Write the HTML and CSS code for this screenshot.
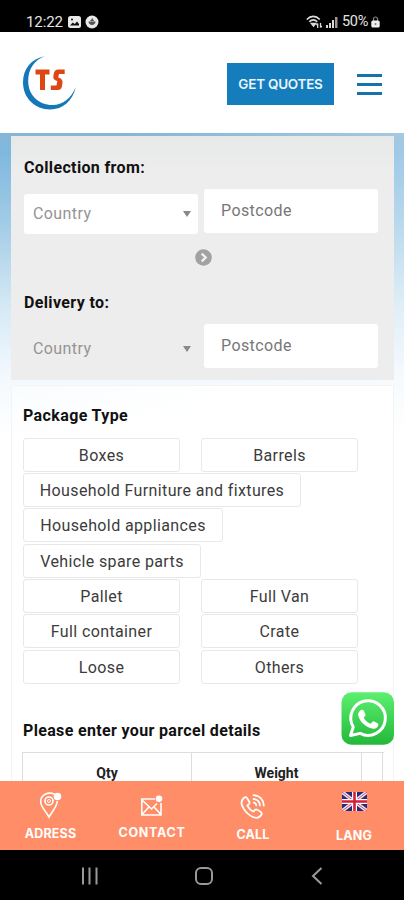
FILE: index.html
```html
<!DOCTYPE html>
<html lang="en">
<head>
<meta charset="utf-8">
<title>Get Quotes</title>
<link rel="stylesheet" href="styles.css">
</head>
<body>
<div class="screen">
  <div class="status">
    <span class="clock">12:22</span>
    <svg class="st-pic" width="13" height="12" viewBox="0 0 13 12"><rect width="13" height="12" rx="2.5" fill="#e8e8e8"/><path d="M2 9.5l2.8-3 2 1.6L9 5.500l2 2.500v1.500z" fill="#111"/><circle cx="4" cy="3.500" r="1" fill="#111"/></svg>
    <svg class="st-app" width="14" height="14" viewBox="0 0 14 14"><circle cx="7" cy="7" r="6.500" fill="#e8e8e8"/><path d="M3.500 6.500h7c0 4.500-7 4.500-7 0zM5 6l2.500-3L9 6z" fill="#555"/></svg>
    <span class="grow"></span>
    <svg class="st-wifi" width="17" height="14" viewBox="0 0 17 14" fill="none" stroke="#ddd" stroke-width="1.600"><path d="M.8 4.500c4-4.200 9-4.200 13 0M3.300 6.800c2.500-2.500 5.500-2.500 8 0"/><path d="M5.500 8.500l2 2.500 2-2.500z" fill="#ddd"/><path d="M11.700 13V8.500M10.400 10l1.300-1.500M14.500 8v4.500M15.800 11l-1.300 1.500" stroke-width="1.300"/></svg>
    <svg class="st-sig" width="12" height="11" viewBox="0 0 12 11" fill="#d8d8d8"><path d="M0 8h2v3H0zM3 6h2v5H3zM6 3h2v8H6z"/><path d="M9 0h2.500v11H9z" fill="#999"/></svg>
    <span class="pct">50%</span>
    <svg class="st-bat" width="9" height="12" viewBox="0 0 9 12"><path d="M2.500 5V3a2 2 0 0 1 4 0v2" fill="none" stroke="#888" stroke-width="1.200"/><rect x=".3" y="4.500" width="8.400" height="7" rx="1.500" fill="#eee"/><circle cx="4.500" cy="8" r="1" fill="#777"/></svg>
  </div>

  <header class="header">
    <svg class="logo" width="56" height="56" viewBox="0 0 56 56">
      <path d="M23 1.200C9 3.500 1 14 1 27.500 1 43 13 54.500 28 54.500 41 54.500 50.500 46 53.800 32 49 43.500 41 50 30.500 50 16.500 50 6.200 40 6.200 26 6.200 14 12.500 4.500 23 1.200z" fill="#1478b8"/>
      <path class="mark" d="M13.500 14.500h14v5h-4.500v15.500h-5V19.500h-4.500zM42.700 14.500v4.500h-5.700l-.8 3.500q4.800 1 4.300 5.500l-.7 4q-.7 3-4.300 3h-6.700v-4.500h5.700l.8-4.500q-4.600-1-3.900-5.500l.7-3q.9-3 4-3z"/>
    </svg>
    <span class="grow"></span>
    <a class="quote-btn">GET QUOTES</a>
    <span class="burger"><i></i><i></i><i></i></span>
  </header>

  <main class="page">
    <section class="route">
      <h2 class="collect">Collection from:</h2>
      <div class="fields">
        <div class="select">Country<i class="caret"></i></div>
        <div class="input">Postcode</div>
      </div>
      <div class="swap"><svg width="17" height="17" viewBox="0 0 17 17"><circle cx="8.500" cy="8.500" r="8.300" fill="#a2a2a2"/><path d="M6.700 4.600l4 3.900-4 3.900" fill="none" stroke="#f2f2f2" stroke-width="2.300"/></svg></div>
      <h2 class="deliver">Delivery to:</h2>
      <div class="fields">
        <div class="select flat">Country<i class="caret"></i></div>
        <div class="input">Postcode</div>
      </div>
    </section>

    <section class="package">
      <h2 class="ptype">Package Type</h2>
      <div class="options">
        <div class="pair"><span>Boxes</span><span>Barrels</span></div>
        <div class="wide w1">Household Furniture and fixtures</div>
        <div class="wide w2">Household appliances</div>
        <div class="wide w3">Vehicle spare parts</div>
        <div class="pair"><span>Pallet</span><span>Full Van</span></div>
        <div class="pair"><span>Full container</span><span>Crate</span></div>
        <div class="pair"><span>Loose</span><span>Others</span></div>
      </div>
      <h2 class="parcel">Please enter your parcel details</h2>
      <div class="table"><span>Qty</span><span>Weight</span><span></span></div>
    </section>
  </main>

  <nav class="tabs">
    <a class="t1"><svg width="24" height="27" viewBox="0 0 24 27" fill="none" stroke="#fff" stroke-width="1.600"><path d="M16 2.500C9-1 1.500 3 1.700 10c.1 5 5.300 9.500 8.300 15 3-5.500 8-10 8.300-16"/><circle cx="10" cy="9" r="4"/><circle cx="10" cy="9" r="1.500" stroke-width="1"/><circle cx="18.500" cy="4.500" r="3.800" fill="#fff" stroke="none"/></svg><span>ADRESS</span></a>
    <a class="t2"><svg width="24" height="22" viewBox="0 0 24 22" fill="none" stroke="#fff" stroke-width="1.600"><path d="M15 4H1.800v16H21V8M2 5l9.500 9L17 8.500M2 19.500l7-7.500M21 19.500L14 12"/><circle cx="19" cy="3.700" r="3.300" fill="#fff" stroke="none"/></svg><span>CONTACT</span></a>
    <a class="t3"><svg width="25" height="25" viewBox="0 0 25 25" fill="none" stroke="#fff" stroke-width="1.800" stroke-linejoin="round" stroke-linecap="round"><path d="M4.500 3.500C1 6 .8 9 2.500 12.500c2 4.500 6 8.500 10.500 10.500 3.500 1.500 6.500 1 8.500-2.500.6-1 .2-1.800-.6-2.400l-3.600-2.300c-1-.6-1.800-.4-2.500.4l-1.300 1.500c-3-1.300-4.700-3-6.200-6l1.600-1.500c.8-.8.900-1.500.4-2.500L7 4C6.300 3 5.500 2.800 4.500 3.500z"/><path d="M13.500 1.200c6 .3 10 4.300 10.300 10.300M13.500 5c3.800.3 6.200 2.700 6.500 6.500M13.700 8.700c1.500.2 2.400 1.200 2.600 2.600"/></svg><span>CALL</span></a>
    <a class="t4"><svg width="25" height="19" viewBox="0 0 25 19"><path fill="#252c78" d="M0 0h25v19H0z"/><path d="M0 0l25 19M25 0L0 19" stroke="#f4dfe8" stroke-width="3.600"/><path d="M0 0l25 19M25 0L0 19" stroke="#c9546f" stroke-width="1"/><path d="M12.500 0v19M0 9.500h25" stroke="#fff" stroke-width="5"/><path d="M12.500 0v19M0 9.500h25" stroke="#d51e3b" stroke-width="2.600"/></svg><span>LANG</span></a>
  </nav>

  <div class="sysbar">
    <svg width="18" height="18" viewBox="0 0 18 18" stroke="#999" stroke-width="2"><path d="M2 .5v17M8.500 .5v17M15.500 .5v17"/></svg>
    <svg class="home" width="18" height="18" viewBox="0 0 18 18" fill="none" stroke="#999" stroke-width="2"><rect x="1" y="1" width="16" height="16" rx="5"/></svg>
    <svg width="12" height="18" viewBox="0 0 12 18" fill="none" stroke="#999" stroke-width="2"><path d="M10.500 1L2 9l8.500 8"/></svg>
  </div>

  <a class="whatsapp"><svg width="53" height="53" viewBox="0 0 53 53">
    <defs><linearGradient id="wa" x1="0" y1="0" x2="0" y2="1"><stop offset="0" stop-color="#5bf070"/><stop offset="1" stop-color="#24b83a"/></linearGradient></defs>
    <rect x=".5" y=".3" width="52.500" height="52.500" rx="10" fill="url(#wa)"/>
    <path d="M9.500 43.500l2.800-8.500a17.300 17.300 0 1 1 6.900 6.400z" fill="none" stroke="#fff" stroke-width="3" stroke-linejoin="round"/>
    <path d="M20 18c1.300-.5 2.400-.3 3 .9l1.400 3.500c.3.800-.1 1.500-.7 2.100l-1.100 1.300c1.900 3.100 3.900 4.800 7.100 6l1.600-1.900c.5-.6 1.100-.7 1.800-.4l3.500 1.700c.8.500.9.900.7 2-.7 2.600-3.200 4.100-6.200 3.200-6.900-1.700-12-6.500-13.700-12.200-.8-2.600.3-4.800 2.600-6.200z" fill="#fff"/>
  </svg></a>
</div>
</body>
</html>
```
FILE: styles.css
```css
* { box-sizing: border-box; }
body { margin: 0; font-family: Roboto, sans-serif; background: #fff; }
.screen { position: relative; width: 404px; height: 900px; overflow: hidden; display: flex; flex-direction: column; }
.grow { flex: 1; }
svg { display: block; flex: none; }

.status { height: 32px; flex: none; background: #000; color: #e4e4e4; display: flex; align-items: center; padding: 12px 24px 0 26px; font-size: 15px; line-height: 20px; }
.clock { width: 37px; letter-spacing: -.1px; }
.st-pic { margin-left: 5px; }
.st-app { margin-left: 4px; }
.st-sig { margin-left: 3px; }
.pct { margin-left: 4px; width: 28px; font-size: 14.500px; letter-spacing: -.3px; }
.st-bat { margin-left: 1px; }

.header { height: 101px; flex: none; background: #fff; display: flex; align-items: center; padding: 1px 22px 0; }
.logo { margin-top: -1px; }
.mark { fill: #dc4715; }
.quote-btn { width: 107px; height: 42px; margin-top: 1px; background: #167dbc; color: #e9f5ff; font: 600 13.5px/42px Inter, sans-serif; letter-spacing: -.25px; text-align: center; white-space: nowrap; }
.burger { width: 25px; margin: 2px 0 0 23px; display: grid; gap: 6px; }
.burger i { height: 3px; background: #1672ad; }

.page { flex: 1; min-height: 0; overflow: hidden; padding: 3px 10px 0 11px; background: linear-gradient(90deg, rgba(255,255,255,0) 30%, rgba(255,255,255,.25)), linear-gradient(#86b6d6 0, #7fb8df 20px, #a2cce6 90px, #d3e8f4 170px, #f2f8fd 240px, #fff 300px); }
h2 { margin: 0; font-size: 16px; line-height: 20px; font-weight: 700; color: #111; white-space: nowrap; }
.route { height: 244px; padding: 22px 15px 0 13px; background: linear-gradient(#e7e8e8, #ededed 35px); }
.collect { letter-spacing: .36px; }
.deliver { margin-top: 27px; letter-spacing: .36px; }
.fields { display: grid; grid-template-columns: 174px 174px; gap: 6px; height: 45px; margin-top: 11px; }
.select, .input { color: #949494; font-size: 16px; letter-spacing: .4px; background: #fff; border-radius: 3px; }
.select { display: flex; align-items: center; justify-content: space-between; height: 40px; margin-top: 5px; padding: 0 7px 2px 9px; }
.select.flat { background: none; }
.caret { border: 4px solid transparent; border-top: 6px solid #888; border-bottom: 0; margin-top: 1px; }
.input { height: 44px; line-height: 44px; padding-left: 17px; color: #777; }
.swap { display: flex; justify-content: center; margin-top: 15px; padding-left: 3px; }

.package { margin-top: 5px; height: 460px; width: 383px; border: 1px solid #f3f4f5; background: linear-gradient(90deg, rgba(255,255,255,.4), #fff 55%); padding: 20px 10px 0 11px; }
.ptype { letter-spacing: .38px; }
.options { display: grid; grid-auto-rows: 34px; gap: 1.400px; margin-top: 11.500px; justify-items: start; }
.pair { display: grid; grid-template-columns: 157px 157px; grid-template-rows: 34px; gap: 21px; }
.pair span, .wide { height: 34px; border: 1px solid #e8e8e8; border-radius: 3px; background: #fff; color: #3c3c3c; font-size: 16px; line-height: 33px; letter-spacing: .38px; text-align: center; white-space: nowrap; }
.w1 { width: 278px; }
.w2 { width: 200px; }
.w3 { width: 178px; }
.parcel { margin-top: 37.500px; letter-spacing: .34px; }
.table { display: grid; grid-template-columns: 169px 170px 21px; height: 60px; margin: 11px 0 0 -1px; border: 1px solid #ddd; border-width: 1px 0 0 1px; width: 362px; }
.table span { border-right: 1px solid #ddd; text-align: center; font-size: 14px; font-weight: 700; line-height: 40px; color: #222; }

.tabs { height: 69px; flex: none; background: #ff8d67; display: grid; grid-template-columns: repeat(4, 101px); color: #fff; font: 700 12.500px/16px Inter, sans-serif; }
.tabs a { display: flex; flex-direction: column; align-items: center; }
.tabs span { letter-spacing: .2px; }
.t1 svg { margin: 11px 0 0 1px; }
.t1 span { margin-top: 7px; }
.t2 svg { margin-top: 14px; }
.tabs .t2 span { margin: 8px 0 0 1px; letter-spacing: .7px; }
.t3 svg { margin-top: 13px; }
.t3 span { margin: 8px 0 0 1px; }
.t4 svg { margin: 11px 0 0 2px; }
.t4 span { margin: 17px 0 0 1px; }

.sysbar { height: 50px; flex: none; background: #000; display: flex; align-items: center; justify-content: space-between; padding: 2px 81px 0; }
.home { margin-left: -3px; }

.whatsapp { position: absolute; left: 341px; top: 692px; }
```
